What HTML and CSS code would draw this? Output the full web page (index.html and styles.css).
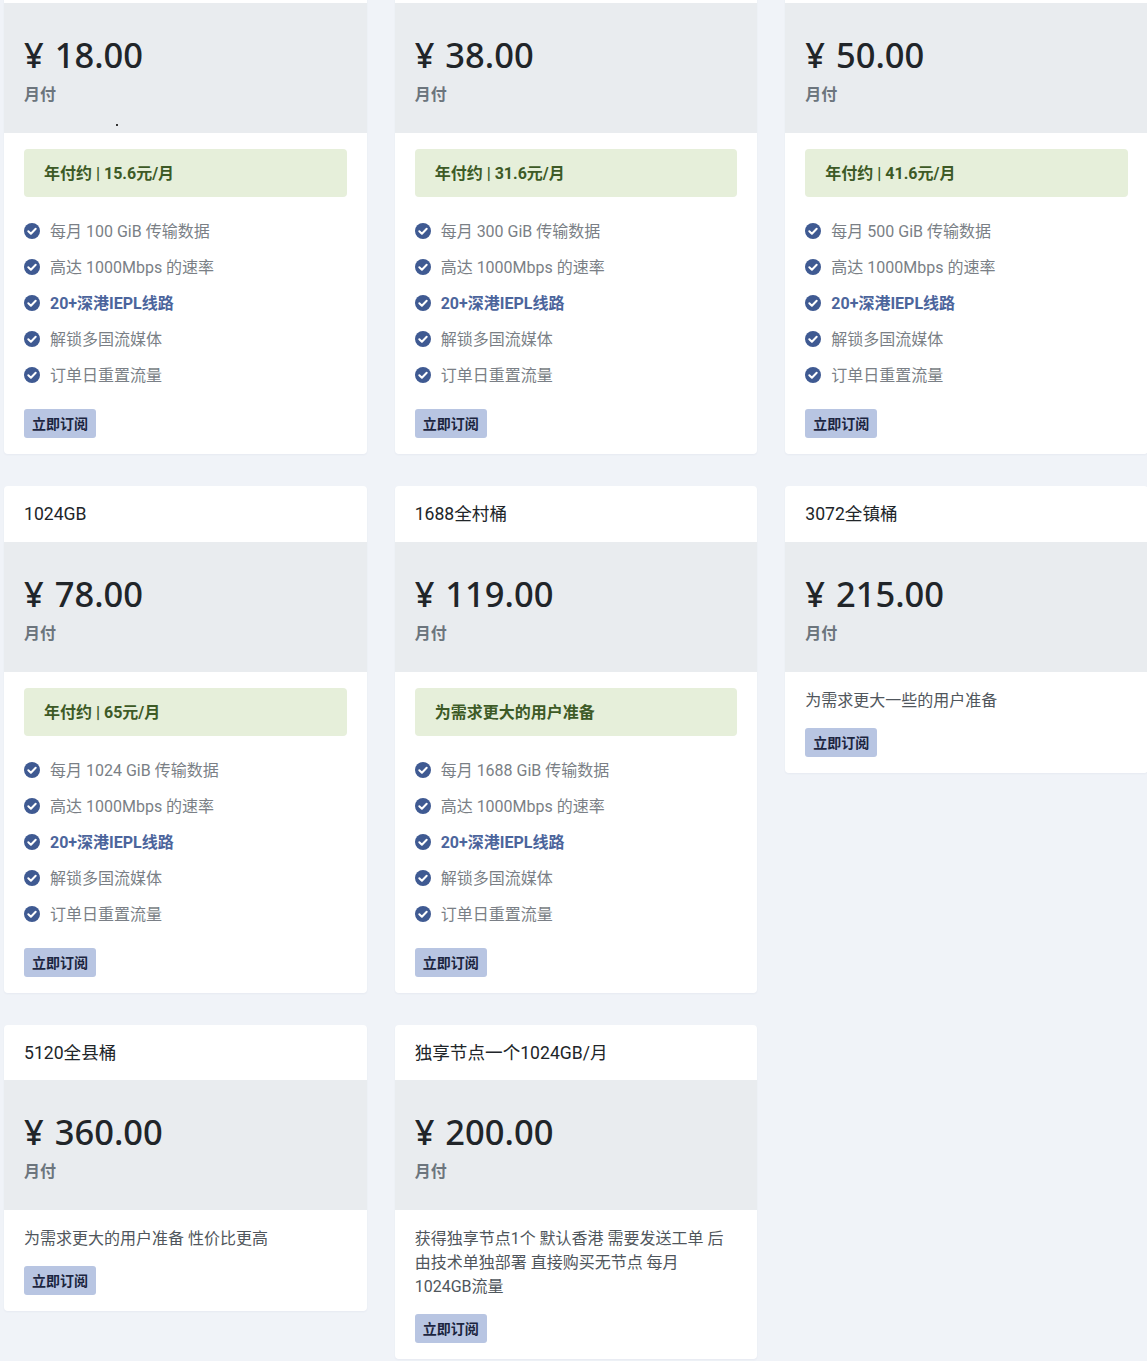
FILE: index.html
```html
<!DOCTYPE html>
<html lang="zh-CN">
<head>
<meta charset="utf-8">
<title>订阅套餐</title>
<link rel="stylesheet" href="styles.css">
</head>
<body>
<svg class="sprite" width="0" height="0" aria-hidden="true"><symbol id="chk" viewBox="0 0 16 16"><circle cx="8" cy="8" r="8" fill="#3f5a92"/><path d="M4.3 8.3l2.6 2.5 4.8-5" fill="none" stroke="#fff" stroke-width="2" stroke-linecap="round" stroke-linejoin="round"/></symbol></svg>
<main class="plans">

<section class="card">
  <div class="card-head"></div>
  <div class="price-box"><div class="price">¥ 18.00</div><div class="period">月付</div><i class="speck"></i></div>
  <div class="card-body">
    <div class="note">年付约 | 15.6元/月</div>
    <ul class="features">
      <li><svg class="tick"><use href="#chk"/></svg>每月 100 GiB 传输数据</li>
      <li><svg class="tick"><use href="#chk"/></svg>高达 1000Mbps 的速率</li>
      <li class="hot"><svg class="tick"><use href="#chk"/></svg>20+深港IEPL线路</li>
      <li><svg class="tick"><use href="#chk"/></svg>解锁多国流媒体</li>
      <li><svg class="tick"><use href="#chk"/></svg>订单日重置流量</li>
    </ul>
    <a class="buy">立即订阅</a>
  </div>
</section>

<section class="card">
  <div class="card-head"></div>
  <div class="price-box"><div class="price">¥ 38.00</div><div class="period">月付</div></div>
  <div class="card-body">
    <div class="note">年付约 | 31.6元/月</div>
    <ul class="features">
      <li><svg class="tick"><use href="#chk"/></svg>每月 300 GiB 传输数据</li>
      <li><svg class="tick"><use href="#chk"/></svg>高达 1000Mbps 的速率</li>
      <li class="hot"><svg class="tick"><use href="#chk"/></svg>20+深港IEPL线路</li>
      <li><svg class="tick"><use href="#chk"/></svg>解锁多国流媒体</li>
      <li><svg class="tick"><use href="#chk"/></svg>订单日重置流量</li>
    </ul>
    <a class="buy">立即订阅</a>
  </div>
</section>

<section class="card">
  <div class="card-head"></div>
  <div class="price-box"><div class="price">¥ 50.00</div><div class="period">月付</div></div>
  <div class="card-body">
    <div class="note">年付约 | 41.6元/月</div>
    <ul class="features">
      <li><svg class="tick"><use href="#chk"/></svg>每月 500 GiB 传输数据</li>
      <li><svg class="tick"><use href="#chk"/></svg>高达 1000Mbps 的速率</li>
      <li class="hot"><svg class="tick"><use href="#chk"/></svg>20+深港IEPL线路</li>
      <li><svg class="tick"><use href="#chk"/></svg>解锁多国流媒体</li>
      <li><svg class="tick"><use href="#chk"/></svg>订单日重置流量</li>
    </ul>
    <a class="buy">立即订阅</a>
  </div>
</section>

<section class="card">
  <div class="card-head">1024GB</div>
  <div class="price-box"><div class="price">¥ 78.00</div><div class="period">月付</div></div>
  <div class="card-body">
    <div class="note">年付约 | 65元/月</div>
    <ul class="features">
      <li><svg class="tick"><use href="#chk"/></svg>每月 1024 GiB 传输数据</li>
      <li><svg class="tick"><use href="#chk"/></svg>高达 1000Mbps 的速率</li>
      <li class="hot"><svg class="tick"><use href="#chk"/></svg>20+深港IEPL线路</li>
      <li><svg class="tick"><use href="#chk"/></svg>解锁多国流媒体</li>
      <li><svg class="tick"><use href="#chk"/></svg>订单日重置流量</li>
    </ul>
    <a class="buy">立即订阅</a>
  </div>
</section>

<section class="card">
  <div class="card-head">1688全村桶</div>
  <div class="price-box"><div class="price">¥ 119.00</div><div class="period">月付</div></div>
  <div class="card-body">
    <div class="note">为需求更大的用户准备</div>
    <ul class="features">
      <li><svg class="tick"><use href="#chk"/></svg>每月 1688 GiB 传输数据</li>
      <li><svg class="tick"><use href="#chk"/></svg>高达 1000Mbps 的速率</li>
      <li class="hot"><svg class="tick"><use href="#chk"/></svg>20+深港IEPL线路</li>
      <li><svg class="tick"><use href="#chk"/></svg>解锁多国流媒体</li>
      <li><svg class="tick"><use href="#chk"/></svg>订单日重置流量</li>
    </ul>
    <a class="buy">立即订阅</a>
  </div>
</section>

<section class="card">
  <div class="card-head">3072全镇桶</div>
  <div class="price-box"><div class="price">¥ 215.00</div><div class="period">月付</div></div>
  <div class="card-body">
    <p class="desc">为需求更大一些的用户准备</p>
    <a class="buy">立即订阅</a>
  </div>
</section>

<section class="card">
  <div class="card-head">5120全县桶</div>
  <div class="price-box"><div class="price">¥ 360.00</div><div class="period">月付</div></div>
  <div class="card-body">
    <p class="desc">为需求更大的用户准备 性价比更高</p>
    <a class="buy">立即订阅</a>
  </div>
</section>

<section class="card">
  <div class="card-head">独享节点一个1024GB/月</div>
  <div class="price-box"><div class="price">¥ 200.00</div><div class="period">月付</div></div>
  <div class="card-body">
    <p class="desc">获得独享节点1个 默认香港 需要发送工单 后由技术单独部署 直接购买无节点 每月 1024GB流量</p>
    <a class="buy">立即订阅</a>
  </div>
</section>

</main>
</body>
</html>
```

FILE: styles.css
```css
* { box-sizing: border-box; }
html, body { height: 100%; }
body {
  margin: 0;
  overflow: hidden;
  background: #f0f3f8;
  color: #212529;
  font-family: Roboto, "Noto Sans CJK SC", sans-serif;
  font-size: 16px;
  line-height: 24px;
}
.sprite { position: absolute; }
.plans {
  display: grid;
  grid-template-columns: repeat(3, 362.67px);
  column-gap: 28px;
  row-gap: 32px;
  align-items: start;
  width: 1148px;
  margin-top: -52.6px;
  padding-left: 4px;
}
.card {
  background: #fff;
  border-radius: 4px;
  overflow: hidden;
  box-shadow: 0 1px 2px rgba(60, 75, 110, .05);
}
.card-head {
  min-height: 55.6px;
  padding: 15.4px 20px 14.2px;
  font-size: 17.6px;
  line-height: 26px;
}
.price-box {
  position: relative;
  height: 130px;
  padding: 30px 20px 0;
  background: #e9ecef;
}
.price {
  font-family: "Noto Sans", "Noto Sans CJK SC", sans-serif;
  font-size: 34.5px;
  font-weight: 500;
  line-height: 44px;
  word-spacing: 2px;
}
.period {
  margin-top: 6px;
  color: #6c757d;
  font-weight: 700;
}
.speck {
  position: absolute;
  left: 112px;
  top: 120.6px;
  width: 2px;
  height: 2px;
  background: #333;
}
.card-body { padding: 16px 20px; }
.note {
  height: 48px;
  padding: 13px 20px 11px;
  margin-bottom: 16px;
  border-radius: 4px;
  background: #e6efda;
  color: #3d5a26;
  font-weight: 700;
}
.features { list-style: none; margin: 0 0 16px; padding: 0; }
.features li {
  display: flex;
  align-items: center;
  gap: 10px;
  height: 36px;
  padding-top: 2px;
  color: #7a7f86;
}
.features .hot { color: #4c659c; font-weight: 700; }
.tick { flex: none; width: 16px; height: 16px; margin-top: -2px; }
.desc { margin: 0 0 15px; padding-top: 1px; color: #50565c; }
.buy {
  display: inline-block;
  vertical-align: top;
  height: 29px;
  padding: 2px 8px 0;
  border-radius: 3px;
  background: #b8c5e2;
  color: #1c2540;
  font-size: 14px;
  font-weight: 700;
  line-height: 27px;
}
```
